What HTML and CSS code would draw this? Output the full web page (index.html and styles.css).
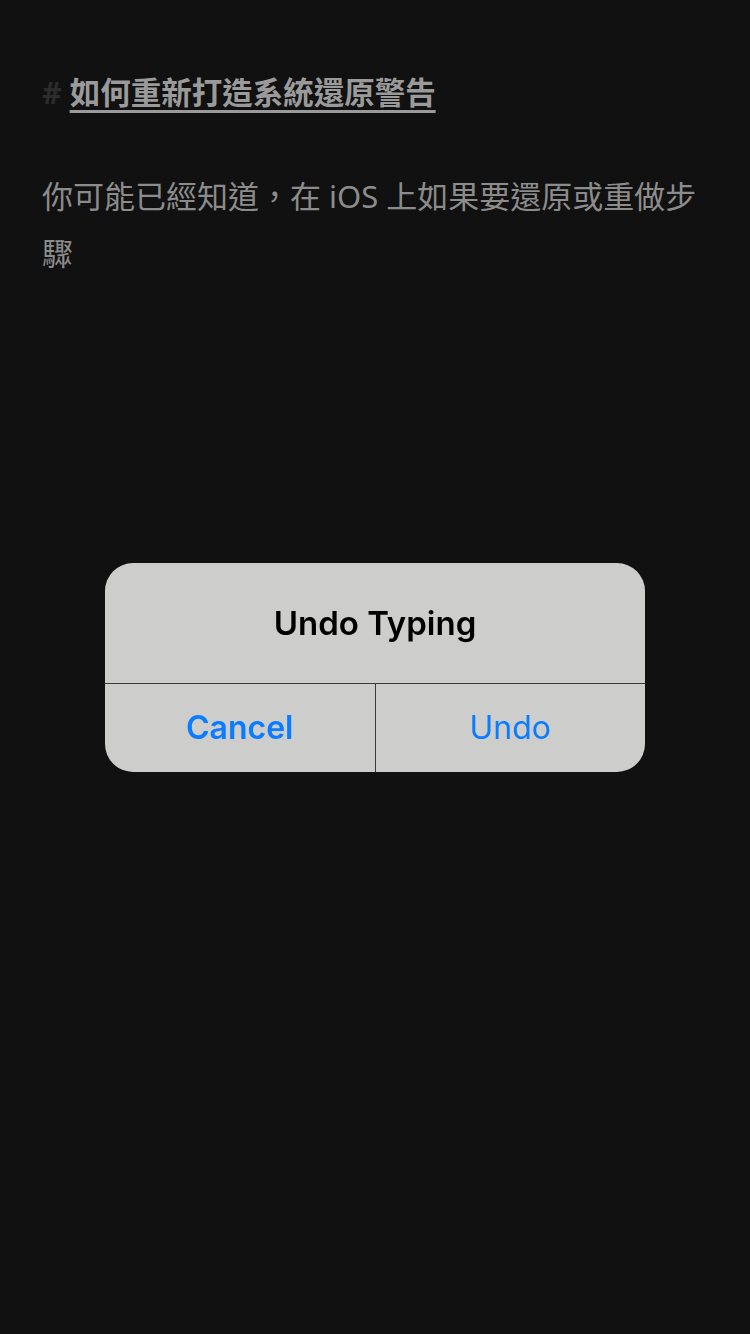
FILE: index.html
```html
<!DOCTYPE html>
<html lang="zh-Hant">

<head>
    <meta charset="UTF-8">
    <meta name="viewport" content="width=device-width, initial-scale=1.0">
    <title>如何重新打造系統還原警告</title>
    <link rel="stylesheet" href="styles.css">
</head>

<body>
    <div class="editor">
        <h1 class="title"><span class="hash">#</span> <u>如何重新打造系統還原警告</u></h1>
        <p class="body-text">你可能已經知道，在 iOS 上如果要還原或重做步驟</p>
    </div>

    <div class="overlay">
        <div class="alert">
            <div class="alert-title">Undo Typing</div>
            <div class="alert-actions">
                <div class="alert-btn btn-cancel">Cancel</div>
                <div class="alert-btn">Undo</div>
            </div>
        </div>
    </div>
</body>

</html>
```

FILE: styles.css
```css
html,
body {
    margin: 0;
    padding: 0;
    height: 100%;
}

body {
    background-color: #111111;
    font-family: "Noto Sans", "Noto Sans CJK TC", sans-serif;
}

.editor {
    padding: 66px 42px 0 42px;
}

.title {
    margin: 0;
    font-size: 30.5px;
    line-height: 52px;
    font-weight: bold;
    color: #9a9a9a;
}

.title u {
    text-decoration-thickness: 3px;
    text-underline-offset: 6px;
}

.hash {
    color: #2c2c2c;
}

.body-text {
    margin: 50px 0 0 0;
    font-size: 31px;
    line-height: 57px;
    color: #8c8c8c;
}

.overlay {
    position: fixed;
    top: 0;
    left: 0;
    right: 0;
    bottom: 0;
    display: flex;
    align-items: center;
    justify-content: center;
}

.alert {
    width: 540px;
    background-color: #cdcdcc;
    border-radius: 28px;
    overflow: hidden;
    font-family: Inter, "Liberation Sans", sans-serif;
}

.alert-title {
    height: 120px;
    display: flex;
    align-items: center;
    justify-content: center;
    font-size: 33px;
    font-weight: 600;
    color: #000;
    border-bottom: 1px solid #3a3a3a;
}

.alert-actions {
    display: flex;
    height: 88px;
}

.alert-btn {
    flex: 1;
    display: flex;
    align-items: center;
    justify-content: center;
    font-size: 32px;
    color: #0a7cff;
}

.btn-cancel {
    font-weight: 600;
    border-right: 1px solid #3a3a3a;
}
```
